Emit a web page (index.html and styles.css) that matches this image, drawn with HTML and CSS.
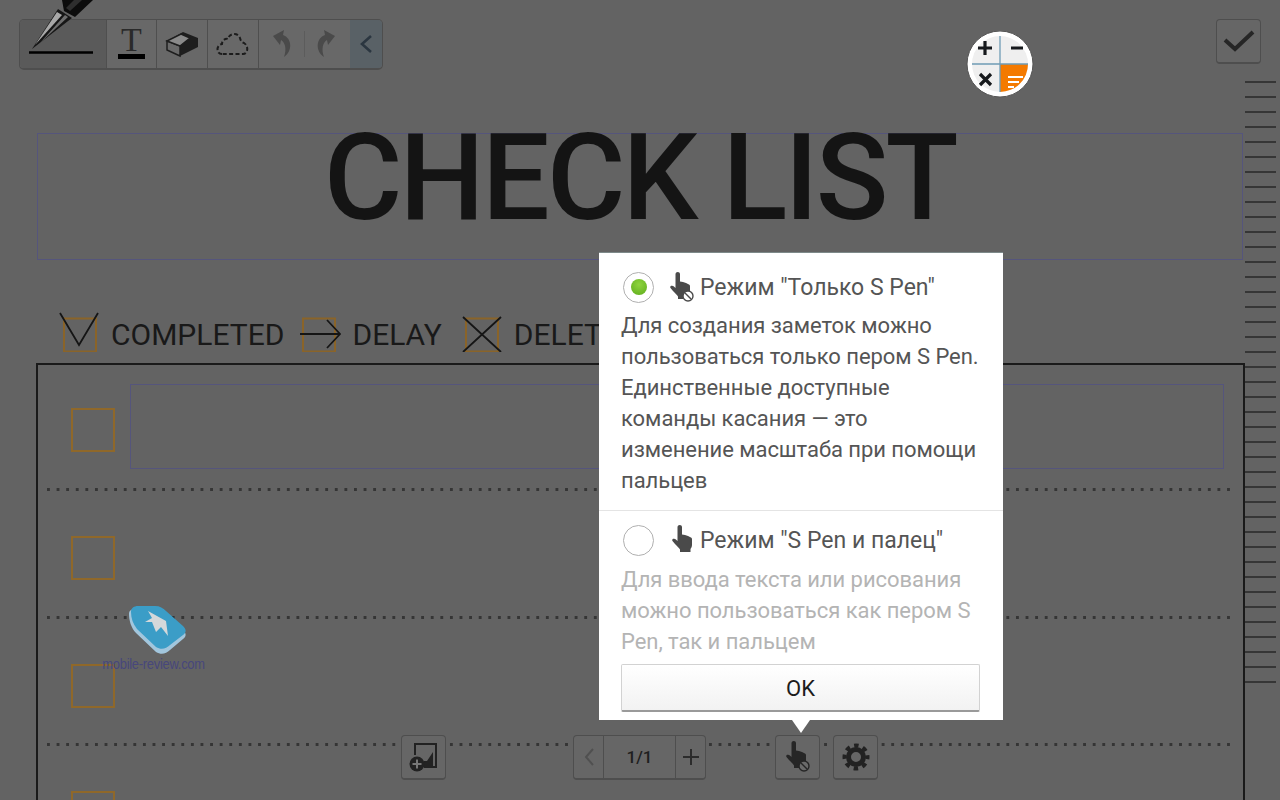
FILE: index.html
```html
<!DOCTYPE html>
<html lang="en">
<head>
  <meta charset="UTF-8">
  <title>Check List</title>
  <link rel="stylesheet" href="styles.css">
</head>
<body>
  <div class="screen">

    <!-- Top toolbar -->
    <div class="topbar">
      <div class="toolbar">
        <div class="tool tool-pen">
          <svg class="pen-icon" width="87" height="70" viewBox="0 0 87 70">
            <path d="M42 0 H73 L55 17 L44 11 Z" fill="#0c0c0c"/>
            <path d="M54 0 H62 L50 11 L46 8 Z" fill="#2e2e2e"/>
            <path d="M38 9 L52 18 L12 49 Z" fill="#161616"/>
            <path d="M37 12 L42 15 L15 45 Z" fill="#a8a8a8"/>
            <path d="M45 15 L48 17 L20 43 Z" fill="#6e6e6e"/>
            <path d="M9 52.500 H73" stroke="#000" stroke-width="2.500"/>
          </svg>
        </div>
        <div class="tool tool-text">
          <span class="t-glyph">T</span>
        </div>
        <div class="tool">
          <svg width="34" height="28" viewBox="0 0 34 28">
            <path d="M2 11 L18 2 L33 8 L33 17 L15 26 Z" fill="#1e1e1e"/>
            <path d="M2 11 L15 16 L15 26 L2 20 Z" fill="#6a6a6a" stroke="#1e1e1e" stroke-width="1.500"/>
            <path d="M2 11 L16 4 L25 8 L15 16 Z" fill="#8a8a8a" stroke="#1e1e1e" stroke-width="1.500"/>
          </svg>
        </div>
        <div class="tool">
          <svg width="34" height="26" viewBox="0 0 34 26">
            <path d="M6 23 C0 23 0 14 6 13 C6 9 10 7 12 8 C13 2 22 1 24 7 C25 11 26 11 28 12 C33 15 32 23 27 23 Z" fill="none" stroke="#1c1c1c" stroke-width="2" stroke-dasharray="4 2.400"/>
          </svg>
        </div>
        <div class="tool tool-history">
          <svg width="26" height="30" viewBox="0 0 26 30">
            <path d="M3 7 L14 1 L13 6 C22 9 23 22 14 28 C17 20 15 13 11 11 L10 16 Z" fill="#4a4a4a"/>
          </svg>
          <span class="history-sep"></span>
          <svg width="26" height="30" viewBox="0 0 26 30">
            <path d="M23 7 L12 1 L13 6 C4 9 3 22 12 28 C9 20 11 13 15 11 L16 16 Z" fill="#4a4a4a"/>
          </svg>
        </div>
        <div class="tool tool-collapse">
          <svg width="14" height="20" viewBox="0 0 14 20">
            <path d="M12 2 L3 10 L12 18" fill="none" stroke="#2b3640" stroke-width="2.600"/>
          </svg>
        </div>
      </div>
      <div class="icon-btn done-btn">
        <svg width="34" height="24" viewBox="0 0 34 24">
          <path d="M3 11 L13 20 L31 3" fill="none" stroke="#262626" stroke-width="4"/>
        </svg>
      </div>
    </div>

    <!-- Note sheet -->
    <div class="sheet">
      <div class="sheet-main">
        <div class="title-box">
          <h1 class="title">CHECK LIST</h1>
        </div>

        <div class="legend">
          <div class="legend-item item-completed">
            <svg width="42" height="40" viewBox="0 0 42 40">
              <rect x="6" y="6.500" width="32" height="33" fill="none" stroke="#8a6429" stroke-width="2"/>
              <path d="M2 1 L21 33 L40 1" fill="none" stroke="#151515" stroke-width="1.800"/>
            </svg>
            <span>COMPLETED</span>
          </div>
          <div class="legend-item item-delay">
            <svg width="42" height="40" viewBox="0 0 42 40">
              <rect x="3" y="6.500" width="32" height="33" fill="none" stroke="#8a6429" stroke-width="2"/>
              <path d="M0 22 H39 M27 8 L40 22 L27 36" fill="none" stroke="#151515" stroke-width="1.800"/>
            </svg>
            <span>DELAY</span>
          </div>
          <div class="legend-item item-delete">
            <svg width="42" height="40" viewBox="0 0 42 40">
              <rect x="4" y="6.500" width="32" height="33" fill="none" stroke="#8a6429" stroke-width="2"/>
              <path d="M1 5 L39 40 M39 5 L1 40" fill="none" stroke="#151515" stroke-width="1.800"/>
            </svg>
            <span>DELETE</span>
          </div>
        </div>

        <div class="table">
          <div class="row row-first">
            <span class="box"></span>
            <div class="field"></div>
          </div>
          <div class="row"><span class="box"></span></div>
          <div class="row"><span class="box"></span></div>
          <div class="row"><span class="box"></span></div>
        </div>
      </div>
      <div class="ruler"></div>
    </div>

    <!-- Floating calculator -->
    <svg class="calc" width="68" height="68" viewBox="0 0 68 68">
      <circle cx="34" cy="33" r="33" fill="#fff" stroke="#555" stroke-width="1"/>
      <circle cx="34" cy="33" r="28" fill="#efefef"/>
      <path d="M34 33 H62 A28 28 0 0 1 34 61 Z" fill="#f47a00"/>
      <path d="M34 5 V61 M6 33 H62" stroke="#6f9cb5" stroke-width="1.300"/>
      <path d="M12 17 H26 M19 10 V24 M45 17 H57 M14 43 L25 54 M25 43 L14 54" stroke="#16191c" stroke-width="3.200"/>
      <path d="M42 46 H57 M42 51 H53 M42 56 H48" stroke="#fff" stroke-width="2"/>
    </svg>

    <!-- Watermark -->
    <div class="watermark">
      <svg width="60" height="50" viewBox="0 0 60 50">
        <path d="M1 8 C1 4 4 3 8 3 L27 3 C32 3 35 6 38 9 L55 24 C59 28 58 31 55 33 L42 44 C38 48 33 49 28 46 L8 27 C3 22 1 14 1 8 Z" fill="#a2c6dd"/>
        <path d="M3 6 C3 2 6 0 10 0 L27 0 C32 0 35 2 38 5 L55 20 C59 24 58 27 55 29 L42 39 C38 43 33 44 28 41 L9 23 C5 18 3 12 3 6 Z" fill="#3b9dc7"/>
        <path d="M20 5 L38 15 L40 30 L33 21 L28 26 L24 16 L17 16 L24 12 Z" fill="#d4d8da"/>
      </svg>
      <span class="watermark-text">mobile-review.com</span>
    </div>

    <!-- Bottom floating buttons -->
    <div class="bottom-bar">
      <div class="icon-btn add-btn">
        <svg width="30" height="30" viewBox="0 0 30 30">
          <path d="M6 13 V2 H27 V25 H15" fill="none" stroke="#222" stroke-width="2"/>
          <path d="M15 19 L18 19 L24 10 V24 H15 Z" fill="#222"/>
          <circle cx="8" cy="22" r="7.500" fill="#222"/>
          <path d="M8 17.500 V26.500 M3.500 22 H12.500" stroke="#777" stroke-width="2"/>
        </svg>
      </div>
      <div class="pager">
        <div class="pager-btn">
          <svg width="12" height="20" viewBox="0 0 12 20">
            <path d="M10 2 L3 10 L10 18" fill="none" stroke="#505050" stroke-width="2"/>
          </svg>
        </div>
        <div class="pager-count">1/1</div>
        <div class="pager-btn">
          <svg width="18" height="18" viewBox="0 0 18 18">
            <path d="M9 1 V17 M1 9 H17" stroke="#2c2c2c" stroke-width="2"/>
          </svg>
        </div>
      </div>
      <div class="icon-btn pointer-btn">
        <svg width="24" height="32" viewBox="0 0 24 32">
          <path d="M5.500 2.200 C5.500 .8 6.600 0 7.800 0 C9 0 10 .8 10 2.200 V9.500 L13 10 L16 11 L19 12.500 C20 13 20 14 20 15 V20 C20 22 19 23 18.500 24 V27 H8 V24.500 C7 23 5 21 3 19 L.5 16 C-.2 15 .5 13.500 2 13.800 C3.500 14 4.500 15 5.500 16 Z" fill="#262626"/>
          <circle cx="18" cy="25" r="5" fill="#6a6a6a" stroke="#262626" stroke-width="1.400"/>
          <path d="M15 22 L21 28" stroke="#262626" stroke-width="1.400"/>
        </svg>
      </div>
      <div class="icon-btn gear-btn">
        <svg width="28" height="28" viewBox="0 0 28 28">
          <circle cx="14" cy="14" r="7.500" fill="none" stroke="#222" stroke-width="5"/>
          <circle cx="14" cy="14" r="11.500" fill="none" stroke="#222" stroke-width="4" stroke-dasharray="4.500 4.530" stroke-dashoffset="2.250"/>
        </svg>
      </div>
    </div>

    <!-- Input mode popup -->
    <div class="popup">
      <div class="mode">
        <div class="mode-head">
          <span class="radio radio-on"></span>
          <svg class="hand" width="24" height="30" viewBox="0 0 24 30">
            <path d="M5.500 2.200 C5.500 .8 6.600 0 7.800 0 C9 0 10 .8 10 2.200 V9.500 L13 10 L16 11 L19 12.500 C20 13 20 14 20 15 V20 C20 22 19 23 18.500 24 V27 H8 V24.500 C7 23 5 21 3 19 L.5 16 C-.2 15 .5 13.500 2 13.800 C3.500 14 4.500 15 5.500 16 Z" fill="#4a4a4a"/>
            <circle cx="18" cy="24" r="5" fill="#fff" stroke="#4a4a4a" stroke-width="1.400"/>
            <path d="M15 21 L21 27" stroke="#4a4a4a" stroke-width="1.400"/>
          </svg>
          <span class="mode-name">Режим "Только S Pen"</span>
        </div>
        <p class="mode-text">Для создания заметок можно пользоваться только пером S Pen. Единственные доступные команды касания — это изменение масштаба при помощи пальцев</p>
      </div>
      <div class="mode mode-second">
        <div class="mode-head">
          <span class="radio"></span>
          <svg class="hand hand-plain" width="22" height="30" viewBox="0 0 22 30">
            <path d="M5.500 2.200 C5.500 .8 6.600 0 7.800 0 C9 0 10 .8 10 2.200 V9.500 L13 10 L16 11 L19 12.500 C20 13 20 14 20 15 V20 C20 22 19 23 18.500 24 V27 H8 V24.500 C7 23 5 21 3 19 L.5 16 C-.2 15 .5 13.500 2 13.800 C3.500 14 4.500 15 5.500 16 Z" fill="#4a4a4a"/>
          </svg>
          <span class="mode-name">Режим "S Pen и палец"</span>
        </div>
        <p class="mode-text mode-text-off">Для ввода текста или рисования можно пользоваться как пером S Pen, так и пальцем</p>
      </div>
      <button class="ok-btn">OK</button>
      <span class="popup-arrow"></span>
    </div>

  </div>
</body>
</html>
```

FILE: styles.css
```css
* {
  margin: 0;
  padding: 0;
  box-sizing: border-box;
}

body {
  font-family: 'Roboto', sans-serif;
  background-color: #636363;
}

.screen {
  position: relative;
  width: 1280px;
  height: 800px;
  overflow: hidden;
  background-color: #636363;
}

/* Top toolbar */
.topbar {
  display: flex;
  justify-content: space-between;
  align-items: flex-start;
  height: 81px;
  padding: 19px 19px 0 19px;
}

.toolbar {
  display: flex;
  width: 364px;
  height: 51px;
  background-color: #686868;
  border: 1px solid #4e4e4e;
  border-bottom-width: 2px;
  border-radius: 5px;
}

.tool {
  display: flex;
  justify-content: center;
  align-items: center;
  width: 51px;
  border-right: 1px solid #4f4f4f;
}

.tool-pen {
  position: relative;
  width: 87px;
  background-color: #5a5a5a;
  border-radius: 4px 0 0 4px;
}

.pen-icon {
  position: absolute;
  top: -20px;
  left: 0;
  overflow: visible;
}

.tool-text {
  flex-direction: column;
  justify-content: flex-start;
}

.t-glyph {
  font-family: 'Liberation Serif', serif;
  font-size: 34px;
  line-height: 34px;
  height: 31px;
  margin-top: 3px;
  color: #2a2a2a;
}

.tool-text::after {
  content: '';
  width: 27px;
  height: 5px;
  background-color: #000;
}

.tool-history {
  justify-content: space-around;
  width: 92px;
  padding: 0 8px;
  border-right: none;
}

.history-sep {
  width: 1px;
  height: 26px;
  background-color: #5c5c5c;
}

.tool-collapse {
  width: 32px;
  background-color: #596166;
  border-right: none;
  border-radius: 0 4px 4px 0;
}

.icon-btn {
  display: flex;
  justify-content: center;
  align-items: center;
  width: 45px;
  height: 45px;
  background-color: #666;
  border: 1px solid #4e4e4e;
  border-bottom-width: 2px;
  border-radius: 4px;
}

/* Note sheet */
.sheet {
  display: flex;
  height: 719px;
}

.sheet-main {
  width: 1245px;
  padding: 52px 0 0 36px;
}

.title-box {
  height: 127px;
  margin: 0 2px 0 1px;
  border: 1px solid #55557c;
}

.title {
  font-size: 120px;
  font-weight: 500;
  line-height: 88px;
  letter-spacing: -2.800px;
  text-align: center;
  color: #141414;
}

.legend {
  display: flex;
  height: 40px;
  margin: 52px 0 11px 0;
  padding-left: 22px;
  font-size: 30px;
  color: #191919;
  white-space: nowrap;
}

.legend-item {
  display: flex;
  align-items: center;
}

.legend-item span {
  margin-top: 4px;
  margin-left: 10px;
}

.item-completed span {
  margin-left: 11px;
}

.item-completed {
  margin-right: 16px;
}

.item-delay {
  margin-right: 20px;
}

.table {
  height: 440px;
  border: 2px solid #1a1a1a;
  border-bottom: none;
}

.row {
  display: flex;
  align-items: flex-start;
  height: 127.500px;
  margin: 0 9px 0 9px;
  padding: 45px 0 0 24px;
  background-image: linear-gradient(90deg, #353535 3px, transparent 3px);
  background-size: 9.600px 3px;
  background-position: 0 bottom;
  background-repeat: repeat-x;
}

.row-first {
  height: 126px;
  padding-top: 43px;
}

.box {
  flex: none;
  width: 44px;
  height: 44px;
  border: 2.500px solid #8f682a;
}

.field {
  flex: 1;
  height: 85px;
  margin: -24px 10px 0 15px;
  border: 1px solid #55557c;
}

.ruler {
  width: 31px;
  height: 602px;
  background-image: repeating-linear-gradient(180deg, #363636 0, #363636 2px, transparent 2px, transparent 15px);
}

/* Floating calculator */
.calc {
  position: absolute;
  top: 31px;
  left: 966px;
}

/* Watermark */
.watermark {
  position: absolute;
  top: 606px;
  left: 104px;
  display: flex;
  flex-direction: column;
  align-items: center;
  width: 100px;
}

.watermark svg {
  margin-left: 8px;
}

.watermark-text {
  font-family: 'Liberation Sans', sans-serif;
  font-size: 15px;
  line-height: 16px;
  letter-spacing: -0.300px;
  color: #47477c;
  white-space: nowrap;
  transform: scaleX(0.86);
}

/* Bottom floating buttons */
.bottom-bar {
  position: absolute;
  top: 735px;
  left: 401px;
  display: flex;
}

.add-btn {
  margin-right: 127px;
}

.pager {
  display: flex;
  width: 133px;
  height: 45px;
  margin-right: 69px;
  background-color: #666;
  border: 1px solid #4e4e4e;
  border-bottom-width: 2px;
  border-radius: 4px;
}

.pager-btn {
  display: flex;
  justify-content: center;
  align-items: center;
  width: 29px;
}

.pager-count {
  flex: 1;
  font-size: 17px;
  font-weight: 500;
  line-height: 42px;
  text-align: center;
  color: #1e1e1e;
  border-left: 1px solid #4e4e4e;
  border-right: 1px solid #4e4e4e;
}

.pointer-btn {
  margin-right: 13px;
}

/* Input mode popup */
.popup {
  position: absolute;
  top: 252px;
  left: 599px;
  width: 404px;
  height: 468px;
  background-color: #fff;
  border-top: 1px solid #7e8a8a;
}

.mode {
  height: 258px;
  padding: 19px 22px 0 22px;
  border-bottom: 1px solid #e4e4e4;
}

.mode-second {
  height: 153px;
  padding-top: 14px;
  border-bottom: none;
}

.mode-head {
  display: flex;
  align-items: center;
  height: 30px;
}

.radio {
  flex: none;
  display: flex;
  justify-content: center;
  align-items: center;
  width: 31px;
  height: 31px;
  margin-left: 2px;
  background-color: #fff;
  border: 1px solid #b0b0b0;
  border-radius: 50%;
}

.radio-on::after {
  content: '';
  width: 16px;
  height: 16px;
  background: radial-gradient(circle at 50% 35%, #8fd43e, #5dab1c);
  border-radius: 50%;
}

.hand {
  flex: none;
  margin: 0 6px 0 16px;
}

.hand-plain {
  margin: 0 6px 0 18px;
}

.mode-name {
  font-size: 23px;
  color: #555;
}

.mode-text {
  margin-top: 8px;
  font-size: 22px;
  line-height: 31px;
  letter-spacing: -0.050px;
  color: #555;
}

.mode-second .mode-text {
  margin-top: 9px;
}

.mode-text-off {
  color: #b4b4b4;
}

.ok-btn {
  display: block;
  width: 359px;
  height: 48px;
  margin: 0 0 0 22px;
  padding-top: 2px;
  font-family: 'Roboto', sans-serif;
  font-size: 22px;
  color: #1c1c1c;
  background: linear-gradient(180deg, #fff, #f2f2f2);
  border: 1px solid #d2d2d2;
  border-bottom: 2px solid #9a9a9a;
  border-radius: 2px;
}

.popup-arrow {
  position: absolute;
  top: 467px;
  left: 193px;
  width: 0;
  height: 0;
  border-left: 9px solid transparent;
  border-right: 9px solid transparent;
  border-top: 13px solid #fff;
}
```
